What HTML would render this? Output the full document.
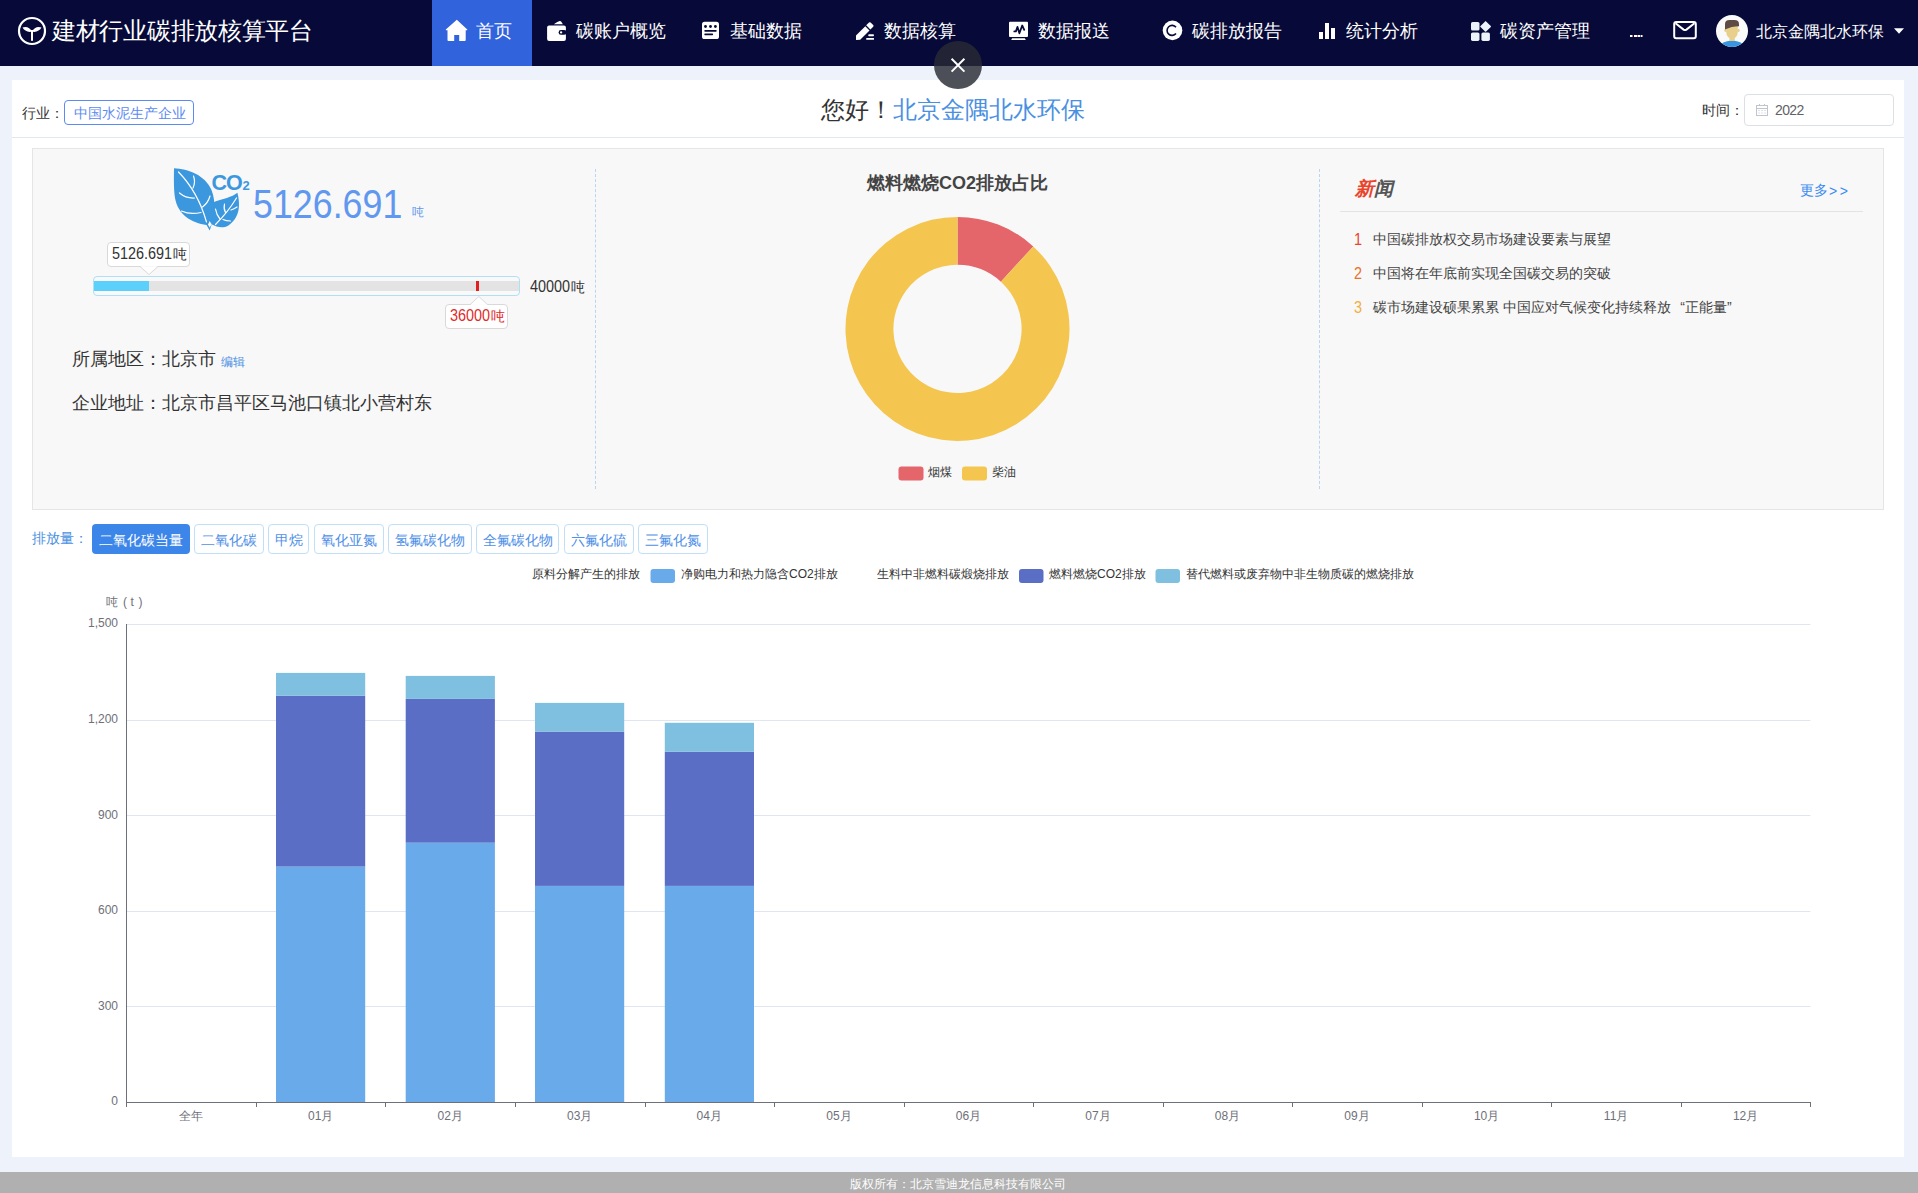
<!DOCTYPE html>
<html><head><meta charset="utf-8">
<style>
*{box-sizing:border-box}
html,body{margin:0;padding:0}
body{width:1918px;height:1193px;overflow:hidden;background:#eef2fa;position:relative;font-family:"Liberation Sans",sans-serif;color:#333}
.a{position:absolute;white-space:nowrap}
#nav{position:absolute;left:0;top:0;width:1918px;height:66px;background:#070a38}
#nav .t{position:absolute;top:20px;font-size:18px;line-height:22px;color:#fff}
#nav svg{position:absolute}
#panel{position:absolute;left:12px;top:80px;width:1892px;height:1077px;background:#fff}
#hdr-line{position:absolute;left:12px;top:137px;width:1892px;height:1px;background:#e2e8f0}
#gray{position:absolute;left:32px;top:148px;width:1852px;height:362px;background:#f8f8f8;border:1px solid #e5e5e5}
#footer{position:absolute;left:0;top:1172px;width:1918px;height:30px;background:#b0b0b0}
</style></head>
<body>
<div id="nav">
  <!-- logo -->
  <svg style="left:17px;top:16px" width="30" height="30" viewBox="0 0 30 30">
    <circle cx="15" cy="15" r="13" fill="none" stroke="#fff" stroke-width="2.2"/>
    <rect x="14" y="14" width="2" height="10.8" fill="#fff"/>
    <path d="M15.2 15.6 C13 11.5 9 10 5.5 11.6 C7 14.8 11 16.6 15.2 15.6 Z" fill="#fff"/>
    <path d="M14.8 15.6 C17 11.5 21 10 24.5 11.6 C23 14.8 19 16.6 14.8 15.6 Z" fill="#fff"/>
  </svg>
  <div class="a" style="left:52px;top:16px;font-size:24px;line-height:30px;color:#fff;letter-spacing:-0.3px">建材行业碳排放核算平台</div>
  <div style="position:absolute;left:432px;top:0;width:100px;height:66px;background:#3163dc"></div>
  <div class="t" style="left:476px">首页</div>
  <div class="t" style="left:576px">碳账户概览</div>
  <div class="t" style="left:730px">基础数据</div>
  <div class="t" style="left:884px">数据核算</div>
  <div class="t" style="left:1038px">数据报送</div>
  <div class="t" style="left:1192px">碳排放报告</div>
  <div class="t" style="left:1346px">统计分析</div>
  <div class="t" style="left:1500px">碳资产管理</div>
  <div class="t" style="left:1629px">...</div>
  <div class="a" style="left:1756px;top:22px;font-size:16px;line-height:20px;color:#fff">北京金隅北水环保</div>
  <svg style="left:445px;top:19px" width="23" height="23" viewBox="0 0 23 23">
    <path d="M11.8 0.8 L0.8 10.6 Q0.6 11.2 1.3 11.2 L2.5 11.2 L2.5 21 Q2.5 22 3.5 22 L9.2 22 L9.2 16 L14.2 16 L14.2 22 L19.7 22 Q20.7 22 20.7 21 L20.7 11.2 L21.9 11.2 Q22.6 11.2 22.3 10.6 Z" fill="#fff"/>
  </svg>
  <svg style="left:546px;top:20px" width="22" height="22" viewBox="0 0 22 22">
    <path d="M7.8 4.3 Q11 2 13.6 1.1 Q14.6 0.8 15.3 1.8 L16.9 4.3 Z" fill="#fff"/>
    <rect x="1.1" y="5.5" width="18.8" height="15.4" rx="2" fill="#fff"/>
    <rect x="12.6" y="10.1" width="8" height="4.7" rx="2.35" fill="#070a38"/>
    <circle cx="15.1" cy="12.45" r="1.15" fill="#fff"/>
  </svg>
  <svg style="left:700px;top:20px" width="22" height="22" viewBox="0 0 22 22">
    <rect x="2" y="1.8" width="17" height="17.2" rx="2.6" fill="#fff"/>
    <circle cx="5.5" cy="6.5" r="1.4" fill="#070a38"/><circle cx="10.5" cy="6.5" r="1.4" fill="#070a38"/><circle cx="15.4" cy="6.5" r="1.4" fill="#070a38"/>
    <rect x="4.3" y="10" width="12.4" height="1.7" rx="0.8" fill="#070a38"/>
    <rect x="4.3" y="13.5" width="8.8" height="1.7" rx="0.8" fill="#070a38"/>
  </svg>
  <svg style="left:854px;top:20px" width="22" height="22" viewBox="0 0 22 22">
    <path d="M2 20 L2 15.5 L11.3 6.2 L15.5 10.4 L6.2 19.7 Z" fill="#fff"/>
    <path d="M12.2 5.3 L15 2.5 Q15.8 1.8 16.6 2.5 L19.2 5.1 Q19.9 5.9 19.2 6.7 L16.4 9.5 Z" fill="#fff"/>
    <rect x="14.2" y="14.3" width="5.8" height="1.9" rx="0.9" fill="#fff"/>
    <rect x="12.2" y="17.9" width="7.8" height="1.9" rx="0.5" fill="#fff"/>
  </svg>
  <svg style="left:1006px;top:20px" width="24" height="22" viewBox="0 0 24 22">
    <rect x="3" y="1.8" width="19" height="15.2" rx="1" fill="#fff"/>
    <path d="M6.2 18.3 L18.8 18.3 L19.8 20 L5.2 20 Z" fill="#fff"/>
    <path d="M8.3 11.4 L9.9 11.4 L11.5 6.9 L13.4 13.3 L16.2 5.5 L18.2 9.8" fill="none" stroke="#070a38" stroke-width="1.8" stroke-linejoin="round" stroke-linecap="round"/>
  </svg>
  <svg style="left:1160px;top:18px" width="25" height="25" viewBox="0 0 25 25">
    <circle cx="12.5" cy="12.4" r="9.8" fill="#fff"/>
    <path d="M16 9.3 A5 5 0 1 0 16 15.5" fill="none" stroke="#070a38" stroke-width="1.6"/>
  </svg>
  <svg style="left:1317px;top:20px" width="20" height="20" viewBox="0 0 20 20">
    <rect x="2" y="12" width="4" height="7" fill="#fff"/>
    <rect x="8" y="3" width="4" height="16" fill="#fff"/>
    <rect x="14" y="8" width="4" height="11" fill="#fff"/>
  </svg>
  <svg style="left:1469px;top:20px" width="24" height="24" viewBox="0 0 24 24">
    <rect x="2" y="2" width="8.5" height="8.5" rx="1.6" fill="#ecf3fb"/>
    <rect x="2" y="12.4" width="8.5" height="8.5" rx="1.6" fill="#ecf3fb"/>
    <rect x="12.4" y="12.4" width="8.5" height="8.5" rx="1.6" fill="#ecf3fb"/>
    <path d="M16.6 0.9 L21.8 6.1 Q22.2 6.5 21.8 6.9 L16.9 11.7 Q16.6 12 16.3 11.7 L11.3 6.8 Q11 6.5 11.3 6.2 Z" fill="#ecf3fb"/>
  </svg>
  <svg style="left:1629px;top:34px" width="14" height="4" viewBox="0 0 14 4">
    <rect x="1" y="1" width="2" height="2" fill="#fff"/><rect x="5" y="1" width="2" height="2" fill="#fff"/><rect x="9" y="1" width="2" height="2" fill="#fff"/>
  </svg>
  <svg style="left:1671px;top:19px" width="28" height="22" viewBox="0 0 28 22">
    <rect x="3.2" y="3" width="21.6" height="16.2" rx="2" fill="none" stroke="#fff" stroke-width="2"/>
    <path d="M4.5 4.2 L12.6 10.6 Q14 11.6 15.4 10.6 L23.5 4.2" fill="none" stroke="#fff" stroke-width="2"/>
  </svg>
  <svg style="left:1715px;top:14px" width="34" height="34" viewBox="0 0 34 34">
    <defs><clipPath id="av"><circle cx="17" cy="17" r="16"/></clipPath></defs>
    <circle cx="17" cy="17" r="16" fill="#fafafa"/>
    <g clip-path="url(#av)">
      <path d="M4 34 Q5 27.5 17 26.5 Q29 27.5 30 34 Z" fill="#3a95e0"/>
      <rect x="14.4" y="21" width="5.4" height="6" fill="#e8d08c"/>
      <path d="M11.2 11 L22.8 11 L22.8 18 Q22.5 24.2 17 24.6 Q11.5 24.2 11.2 18 Z" fill="#e8d08c"/>
      <ellipse cx="10.6" cy="16.4" rx="1.3" ry="1.7" fill="#e8d08c"/>
      <ellipse cx="23.4" cy="16.4" rx="1.3" ry="1.7" fill="#e8d08c"/>
      <path d="M10 15.6 L10 10.2 Q10 6 14.5 6 L19.5 6 Q24 6 24 10.2 L24 12.2 Q16.5 12.2 10 15.6 Z" fill="#5e4b45"/>
    </g>
  </svg>
  <svg style="left:1893px;top:27px" width="12" height="8" viewBox="0 0 12 8">
    <path d="M1 1.2 L11 1.2 L6 6.8 Z" fill="#fff"/>
  </svg>
</div>
<div id="close" style="position:absolute;z-index:10;left:934px;top:41px;width:48px;height:48px;border-radius:50%;background:rgba(40,43,52,0.82)">
  <svg style="position:absolute;left:0;top:0" width="48" height="48" viewBox="0 0 48 48"><path d="M17.6 17.8 L30.4 30.6 M30.4 17.8 L17.6 30.6" stroke="#fff" stroke-width="2"/></svg>
</div>
<div id="panel"></div>
<div id="hdr-line"></div>
<div id="gray"></div>

<!-- header row -->
<div class="a" style="left:22px;top:104px;font-size:14px;line-height:18px;color:#333">行业：</div>
<div class="a" style="left:64px;top:100px;width:130px;height:25px;border:1px solid #5a8af2;border-radius:4px"></div>
<div class="a" style="left:74px;top:104px;font-size:14px;line-height:18px;color:#5a8af2">中国水泥生产企业</div>
<div class="a" style="left:821px;top:95px;font-size:24px;line-height:30px;color:#333">您好！<span style="color:#4a90e2">北京金隅北水环保</span></div>
<div class="a" style="left:1702px;top:101px;font-size:14px;line-height:18px;color:#333">时间：</div>
<div class="a" style="left:1744px;top:94px;width:150px;height:32px;border:1px solid #dcdfe6;border-radius:4px;background:#fff"></div>
<svg class="a" style="left:1754.5px;top:102.5px" width="14" height="14" viewBox="0 0 14 14">
  <rect x="1.5" y="2.5" width="11" height="10" fill="none" stroke="#c0c4cc" stroke-width="1"/>
  <line x1="1.5" y1="5.5" x2="12.5" y2="5.5" stroke="#c0c4cc"/>
  <line x1="4.5" y1="1" x2="4.5" y2="3" stroke="#c0c4cc"/><line x1="9.5" y1="1" x2="9.5" y2="3" stroke="#c0c4cc"/>
  <path d="M3.5 7.5h1M6.5 7.5h1M9.5 7.5h1M3.5 10h1M6.5 10h1M9.5 10h1" stroke="#c0c4cc"/>
</svg>
<div class="a" style="left:1775px;top:101px;font-size:14px;line-height:18px;letter-spacing:-0.6px;color:#606266">2022</div>

<!-- left section -->
<svg class="a" style="left:168px;top:160px" width="90" height="76" viewBox="0 0 90 76">
  <path d="M6 8.3 C20 9 37 15 43.5 30 C48.5 42 46.5 58 41.7 70.4 L38.5 65 C24 63 10 55 7 38 C5.5 28 6 15 6 8.3 Z" fill="#3b97de"/>
  <path d="M69.4 32.8 C72.5 45 72 58 60 65.8 C54.5 68.6 48.5 67 44 64.5 L44 42.8 C55 38.5 64 37.5 69.4 32.8 Z" fill="#3b97de"/>
  <g fill="none" stroke="#fff" stroke-width="1.2" stroke-linecap="round">
    <path d="M10.5 12 Q30 32 38.5 62"/>
    <path d="M25.5 16 Q27.8 22 25 28"/>
    <path d="M11.5 33 Q18 38.5 26.5 38"/>
    <path d="M42 36 Q40 43 34.5 47"/>
    <path d="M13.5 51 Q22 55 33 52.5"/>
    <path d="M68.5 38 Q60 52 47.5 64.5"/>
    <path d="M56.5 44 Q55.5 49 57.5 52.5"/>
    <path d="M69 47 Q66 49 63 50"/>
    <path d="M47.5 49 Q48.5 55 52 59"/>
    <path d="M55 59.5 Q58 61 62.5 61"/>
  </g>
  <path d="M41.7 61 L43.5 64.5 L41.7 67.5 L40 64.5 Z" fill="#fff"/>
  <text x="43.5" y="30" font-family="Liberation Sans" font-weight="bold" font-size="21.5" fill="#3b97de" letter-spacing="-1">CO</text>
  <text x="74.5" y="29.6" font-family="Liberation Sans" font-weight="bold" font-size="13" fill="#3b97de">2</text>
</svg>
<div class="a" style="left:252.5px;top:180px;font-size:41px;line-height:48px;color:#6097ef;transform:scaleX(0.873);transform-origin:0 0">5126.691</div>
<div class="a" style="left:412px;top:205px;font-size:12px;line-height:15px;color:#6097ef">吨</div>

<div class="a" style="left:107px;top:242px;width:83px;height:25px;background:#fff;border:1px solid #d9d9d9;border-radius:4px"></div>
<svg class="a" style="left:139px;top:265px" width="20" height="11" viewBox="0 0 20 11"><path d="M1 1.5 L10 9.5 L19 1.5" fill="#fff" stroke="#d9d9d9" stroke-width="1"/><rect x="2" y="0" width="16" height="1.6" fill="#fff"/></svg>
<div class="a" style="left:112px;top:244.3px;font-size:16px;line-height:19px;color:#333"><span style="display:inline-block;width:61px;transform:scaleX(0.9);transform-origin:0 0">5126.691</span><span style="font-size:14px">吨</span></div>

<div class="a" style="left:93px;top:276px;width:427px;height:20px;border:1px solid #aee0f8;border-radius:4px;background:#faf8f8"></div>
<div class="a" style="left:94px;top:281px;width:425px;height:10px;background:#e3e3e3"></div>
<div class="a" style="left:94px;top:281px;width:55px;height:10px;background:#5bd0fb"></div>
<div class="a" style="left:476px;top:281px;width:3px;height:10px;background:#e02020"></div>
<div class="a" style="left:530px;top:276.6px;font-size:16px;line-height:19px;color:#333"><span style="display:inline-block;width:41px;transform:scaleX(0.9);transform-origin:0 0">40000</span><span style="font-size:14px">吨</span></div>

<div class="a" style="left:445px;top:304px;width:63px;height:25px;background:#fff;border:1px solid #d9d9d9;border-radius:4px"></div>
<svg class="a" style="left:469px;top:296px" width="20" height="10" viewBox="0 0 20 10"><path d="M1 8.7 L9.8 0.5 L18.6 8.7" fill="#fff" stroke="#d9d9d9" stroke-width="1"/><rect x="2" y="8.4" width="16" height="1.6" fill="#fff"/></svg>
<div class="a" style="left:450px;top:306.4px;font-size:16px;line-height:19px;color:#e02a2a"><span style="display:inline-block;width:41px;transform:scaleX(0.9);transform-origin:0 0">36000</span><span style="font-size:14px">吨</span></div>

<div class="a" style="left:72px;top:348px;font-size:18px;line-height:23px;color:#333">所属地区：北京市 <span style="font-size:12px;color:#4a90e2;position:relative;top:1px">编辑</span></div>
<div class="a" style="left:72px;top:392px;font-size:18px;line-height:23px;color:#333">企业地址：北京市昌平区马池口镇北小营村东</div>
<div class="a" style="left:595px;top:169px;width:0;height:320px;border-left:1px dashed #b8d6f4"></div>

<!-- middle donut -->
<div class="a" style="left:867px;top:171.5px;font-size:18px;line-height:23px;font-weight:bold;color:#444">燃料燃烧CO2排放占比</div>
<svg class="a" style="left:0;top:0" width="1918" height="500" viewBox="0 0 1918 500">
  <path d="M957.5 216.89999999999998 A112 112 0 0 1 1033.27 246.42 L1000.86 281.69 A64.1 64.1 0 0 0 957.5 264.79999999999995 Z" fill="#e4656a"/>
  <path d="M1033.27 246.42 A112 112 0 1 1 957.5 216.89999999999998 L957.5 264.79999999999995 A64.1 64.1 0 1 0 1000.86 281.69 Z" fill="#f4c54f"/>
  <rect x="898.5" y="466.5" width="25" height="14" rx="3" fill="#e4656a"/>
  <rect x="962" y="466.5" width="25" height="14" rx="3" fill="#f4c54f"/>
</svg>
<div class="a" style="left:928px;top:465px;font-size:12px;line-height:15px;color:#333">烟煤</div>
<div class="a" style="left:992px;top:465px;font-size:12px;line-height:15px;color:#333">柴油</div>
<div class="a" style="left:1319px;top:169px;width:0;height:320px;border-left:1px dashed #b8d6f4"></div>

<!-- news -->
<div class="a" style="left:1355px;top:177px;font-size:19px;line-height:24px;font-weight:bold;font-style:italic"><span style="color:#e8452c">新</span><span style="color:#555">闻</span></div>
<div class="a" style="left:1800px;top:181px;font-size:14px;line-height:18px;color:#3b8af2">更多<span style="letter-spacing:2.6px;position:relative;top:1px;margin-left:1px">&gt;&gt;</span></div>
<div class="a" style="left:1340px;top:211px;width:523px;height:1px;background:#e3e3e3"></div>
<div class="a" style="left:1354px;top:231px;font-size:16px;line-height:18px;color:#e8452c;transform:scaleX(0.9);transform-origin:0 0">1</div>
<div class="a" style="left:1373px;top:230px;font-size:14px;line-height:18px;color:#444">中国碳排放权交易市场建设要素与展望</div>
<div class="a" style="left:1354px;top:265px;font-size:16px;line-height:18px;color:#e8712c;transform:scaleX(0.9);transform-origin:0 0">2</div>
<div class="a" style="left:1373px;top:264px;font-size:14px;line-height:18px;color:#444">中国将在年底前实现全国碳交易的突破</div>
<div class="a" style="left:1354px;top:299px;font-size:16px;line-height:18px;color:#f0b040;transform:scaleX(0.9);transform-origin:0 0">3</div>
<div class="a" style="left:1373px;top:298px;font-size:14px;line-height:18px;color:#444">碳市场建设硕果累累 中国应对气候变化持续释放<span style="display:inline-block;width:14px;text-align:right">“</span>正能量<span style="display:inline-block;width:14px;text-align:left">”</span></div>
<div id="footer"></div>
<!-- tabs -->
<div class="a" style="left:32px;top:529px;font-size:14px;line-height:18px;color:#4a90e2">排放量：</div>
<div class="a" style="left:92px;top:524px;width:98px;height:30px;background:#3d86e9;border-radius:4px"></div>
<div class="a" style="left:99px;top:531px;font-size:14px;line-height:18px;color:#fff">二氧化碳当量</div>
<div class="a" style="left:194px;top:524px;width:70px;height:30px;border:1px solid #bfe0f8;border-radius:4px"></div>
<div class="a" style="left:201px;top:531px;font-size:14px;line-height:18px;color:#4f90e8">二氧化碳</div>
<div class="a" style="left:268px;top:524px;width:41px;height:30px;border:1px solid #bfe0f8;border-radius:4px"></div>
<div class="a" style="left:275px;top:531px;font-size:14px;line-height:18px;color:#4f90e8">甲烷</div>
<div class="a" style="left:314px;top:524px;width:70px;height:30px;border:1px solid #bfe0f8;border-radius:4px"></div>
<div class="a" style="left:321px;top:531px;font-size:14px;line-height:18px;color:#4f90e8">氧化亚氮</div>
<div class="a" style="left:388px;top:524px;width:84px;height:30px;border:1px solid #bfe0f8;border-radius:4px"></div>
<div class="a" style="left:395px;top:531px;font-size:14px;line-height:18px;color:#4f90e8">氢氟碳化物</div>
<div class="a" style="left:476px;top:524px;width:83px;height:30px;border:1px solid #bfe0f8;border-radius:4px"></div>
<div class="a" style="left:483px;top:531px;font-size:14px;line-height:18px;color:#4f90e8">全氟碳化物</div>
<div class="a" style="left:564px;top:524px;width:70px;height:30px;border:1px solid #bfe0f8;border-radius:4px"></div>
<div class="a" style="left:571px;top:531px;font-size:14px;line-height:18px;color:#4f90e8">六氟化硫</div>
<div class="a" style="left:638px;top:524px;width:70px;height:30px;border:1px solid #bfe0f8;border-radius:4px"></div>
<div class="a" style="left:645px;top:531px;font-size:14px;line-height:18px;color:#4f90e8">三氟化氮</div>

<svg class="a" style="left:0;top:560px" width="1918" height="30" viewBox="0 560 1918 30">
  <rect x="650.5" y="569" width="24.5" height="14" rx="3" fill="#68aaea"/>
  <rect x="1019" y="569" width="24.5" height="14" rx="3" fill="#5a6ec5"/>
  <rect x="1155.5" y="569" width="24.5" height="14" rx="3" fill="#7fbfe0"/>
</svg>
<div class="a" style="left:532px;top:567px;font-size:12px;line-height:15px;color:#333">原料分解产生的排放</div>
<div class="a" style="left:681px;top:567px;font-size:12px;line-height:15px;color:#333">净购电力和热力隐含CO2排放</div>
<div class="a" style="left:877px;top:567px;font-size:12px;line-height:15px;color:#333">生料中非燃料碳煅烧排放</div>
<div class="a" style="left:1049px;top:567px;font-size:12px;line-height:15px;color:#333">燃料燃烧CO2排放</div>
<div class="a" style="left:1186px;top:567px;font-size:12px;line-height:15px;color:#333">替代燃料或废弃物中非生物质碳的燃烧排放</div>
<svg class="a" style="left:0;top:590px" width="1918" height="550" viewBox="0 590 1918 550">
<line x1="126.4" y1="624.5" x2="1810.4" y2="624.5" stroke="#e0e6f1" stroke-width="1"/>
<line x1="126.4" y1="720.5" x2="1810.4" y2="720.5" stroke="#e0e6f1" stroke-width="1"/>
<line x1="126.4" y1="815.5" x2="1810.4" y2="815.5" stroke="#e0e6f1" stroke-width="1"/>
<line x1="126.4" y1="911.5" x2="1810.4" y2="911.5" stroke="#e0e6f1" stroke-width="1"/>
<line x1="126.4" y1="1006.5" x2="1810.4" y2="1006.5" stroke="#e0e6f1" stroke-width="1"/>
<line x1="126.5" y1="624" x2="126.5" y2="1102" stroke="#6e7079" stroke-width="1"/>
<rect x="276" y="866.6" width="89.2" height="235.39999999999998" fill="#68aaea"/>
<rect x="276" y="695.7" width="89.2" height="170.89999999999998" fill="#5a6ec5"/>
<rect x="276" y="672.9" width="89.2" height="22.800000000000068" fill="#7fbfe0"/>
<rect x="405.7" y="842.7" width="89.2" height="259.29999999999995" fill="#68aaea"/>
<rect x="405.7" y="698.9" width="89.2" height="143.80000000000007" fill="#5a6ec5"/>
<rect x="405.7" y="675.9" width="89.2" height="23.0" fill="#7fbfe0"/>
<rect x="535" y="885.9" width="89.2" height="216.10000000000002" fill="#68aaea"/>
<rect x="535" y="731.6" width="89.2" height="154.29999999999995" fill="#5a6ec5"/>
<rect x="535" y="702.9" width="89.2" height="28.700000000000045" fill="#7fbfe0"/>
<rect x="664.8" y="885.9" width="89.2" height="216.10000000000002" fill="#68aaea"/>
<rect x="664.8" y="751.7" width="89.2" height="134.19999999999993" fill="#5a6ec5"/>
<rect x="664.8" y="722.8" width="89.2" height="28.90000000000009" fill="#7fbfe0"/>
<line x1="126.4" y1="1102.5" x2="1810.4" y2="1102.5" stroke="#6e7079" stroke-width="1"/>
<line x1="126.5" y1="1102" x2="126.5" y2="1107" stroke="#6e7079" stroke-width="1"/>
<line x1="256.5" y1="1102" x2="256.5" y2="1107" stroke="#6e7079" stroke-width="1"/>
<line x1="385.5" y1="1102" x2="385.5" y2="1107" stroke="#6e7079" stroke-width="1"/>
<line x1="515.5" y1="1102" x2="515.5" y2="1107" stroke="#6e7079" stroke-width="1"/>
<line x1="645.5" y1="1102" x2="645.5" y2="1107" stroke="#6e7079" stroke-width="1"/>
<line x1="774.5" y1="1102" x2="774.5" y2="1107" stroke="#6e7079" stroke-width="1"/>
<line x1="904.5" y1="1102" x2="904.5" y2="1107" stroke="#6e7079" stroke-width="1"/>
<line x1="1033.5" y1="1102" x2="1033.5" y2="1107" stroke="#6e7079" stroke-width="1"/>
<line x1="1163.5" y1="1102" x2="1163.5" y2="1107" stroke="#6e7079" stroke-width="1"/>
<line x1="1292.5" y1="1102" x2="1292.5" y2="1107" stroke="#6e7079" stroke-width="1"/>
<line x1="1422.5" y1="1102" x2="1422.5" y2="1107" stroke="#6e7079" stroke-width="1"/>
<line x1="1551.5" y1="1102" x2="1551.5" y2="1107" stroke="#6e7079" stroke-width="1"/>
<line x1="1681.5" y1="1102" x2="1681.5" y2="1107" stroke="#6e7079" stroke-width="1"/>
<line x1="1810.5" y1="1102" x2="1810.5" y2="1107" stroke="#6e7079" stroke-width="1"/>
<g font-family="Liberation Sans, sans-serif" font-size="12" fill="#6e7079" text-anchor="middle">
<text x="191.2" y="1120">全年</text>
<text x="320.7" y="1120">01月</text>
<text x="450.2" y="1120">02月</text>
<text x="579.8" y="1120">03月</text>
<text x="709.3" y="1120">04月</text>
<text x="838.9" y="1120">05月</text>
<text x="968.4" y="1120">06月</text>
<text x="1097.9" y="1120">07月</text>
<text x="1227.5" y="1120">08月</text>
<text x="1357.0" y="1120">09月</text>
<text x="1486.6" y="1120">10月</text>
<text x="1616.1" y="1120">11月</text>
<text x="1745.6" y="1120">12月</text>
</g>
<g font-family="Liberation Sans, sans-serif" font-size="12" fill="#6e7079" text-anchor="end">
<text x="118" y="627.3">1,500</text>
<text x="118" y="722.9">1,200</text>
<text x="118" y="818.5">900</text>
<text x="118" y="914.1">600</text>
<text x="118" y="1009.7">300</text>
<text x="118" y="1105.3">0</text>
</g>
<g font-family="Liberation Sans, sans-serif" font-size="12" fill="#6e7079"><text x="106" y="606">吨</text><text x="123" y="606">(</text><text x="130.5" y="606">t</text><text x="138.5" y="606">)</text></g>
</svg>
<div class="a" style="left:850px;top:1177px;font-size:12px;line-height:15px;color:#fff;z-index:2">版权所有：北京雪迪龙信息科技有限公司</div>

</body></html>
